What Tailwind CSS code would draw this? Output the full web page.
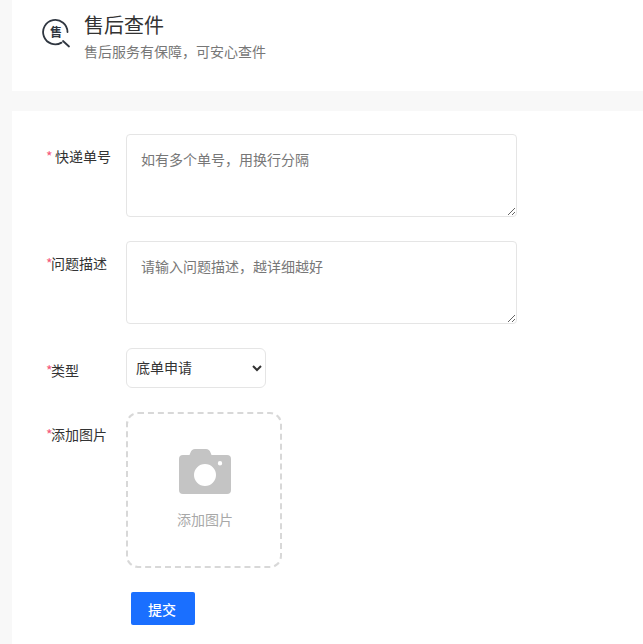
<!DOCTYPE html>
<html lang="zh">
<head>
<meta charset="utf-8">
<title>售后查件</title>
<script src="https://cdn.jsdelivr.net/npm/@tailwindcss/browser@4"></script>
</head>
<body class="h-[644px] overflow-hidden bg-[#f8f8f8] pl-3 font-['Noto_Sans_CJK_SC','Liberation_Sans',sans-serif] text-sm text-[#333]">
  <!-- Header -->
  <div class="flex h-[91px] gap-[12px] bg-white pl-[30px] pt-[12px]">
    <div class="relative mt-[6px] h-[28px] w-[30px]">
      <svg class="absolute inset-0" width="30" height="30" viewBox="0 0 30 30" fill="none" stroke="#2f3640" stroke-width="1.8">
        <path d="M19.500 24.600A12.200 12.200 0 1 1 25.500 14" stroke-linecap="round"/>
        <path d="M21 23l6 5.500" stroke-linecap="round"/>
      </svg>
      <span class="absolute left-[8px] top-[5px] text-[12px] leading-[18px] font-bold text-[#2f3640]">售</span>
    </div>
    <div>
      <h1 class="text-xl leading-[26px] text-[#333]">售后查件</h1>
      <p class="mt-[3px] text-sm leading-5 text-[#777]">售后服务有保障，可安心查件</p>
    </div>
  </div>

  <!-- Form -->
  <form class="mt-5 h-[533px] bg-white pl-[34px] pt-[23px]">
    <div class="flex">
      <label class="w-20 pt-[12px] text-sm leading-5"><span class="mr-1 inline-block w-[5px] text-[#f5587b]">*</span>快递单号</label>
      <textarea class="h-[83px] w-[391px] rounded border border-[#e5e5e5] p-[14px] text-sm leading-5 outline-none placeholder:text-[#777]" placeholder="如有多个单号，用换行分隔"></textarea>
    </div>
    <div class="mt-6 flex">
      <label class="w-20 pt-[12px] text-sm leading-5"><span class="inline-block w-[5px] text-[#f5587b]">*</span>问题描述</label>
      <textarea class="h-[83px] w-[391px] rounded border border-[#e5e5e5] p-[14px] text-sm leading-5 outline-none placeholder:text-[#777]" placeholder="请输入问题描述，越详细越好"></textarea>
    </div>
    <div class="mt-6 flex">
      <label class="w-20 pt-[12px] text-sm leading-5"><span class="inline-block w-[5px] text-[#f5587b]">*</span>类型</label>
      <select class="h-10 w-[140px] rounded-md border border-[#e5e5e5] bg-white pb-[2px] pl-[5px] text-sm outline-none">
        <option>底单申请</option>
      </select>
    </div>
    <div class="mt-6 flex">
      <label class="w-20 pt-[12px] text-sm leading-5"><span class="inline-block w-[5px] text-[#f5587b]">*</span>添加图片</label>
      <div class="flex h-[156px] w-[156px] flex-col items-center rounded-xl border-2 border-dashed border-[#d8d8d8] pl-[2px] pt-[35px]">
        <svg width="52" height="46" viewBox="0 0 52 46" fill="#c4c4c4">
          <path fill-rule="evenodd" d="M4 6h6.500l1-2.500q1.200-3.500 4.500-3.500h11q3.300 0 4.500 3.500l1 2.500H48q4 0 4 4v31q0 4-4 4H4q-4 0-4-4V10q0-4 4-4ZM26 15a11 11 0 1 0 0 22a11 11 0 1 0 0-22ZM41 12a2.200 2.200 0 1 0 0 4.400a2.200 2.200 0 1 0 0-4.400Z"/>
        </svg>
        <span class="mt-[14px] text-sm leading-5 text-[#a8a8a8]">添加图片</span>
      </div>
    </div>
    <button type="button" class="ml-[85px] mt-6 h-[33px] w-16 rounded-[2px] bg-[#1a6fff] pr-[2px] text-sm font-medium text-white">提交</button>
  </form>
</body>
</html>
